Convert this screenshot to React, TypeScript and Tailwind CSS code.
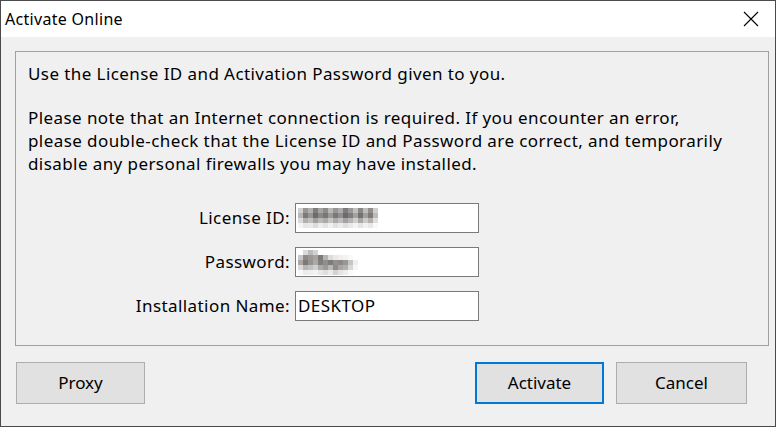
const licenseMosaic = [
  ["#cfcfcf", "#9a9693", "#b1b0b0", "#7f7c7a", "#a7a5a4", "#8d8a89", "#b9b7b7", "#97959a", "#adabab", "#7d7b7a", "#9a9898", "#c0c0c0", "#898786", "#bdbcbc", "#918f8e", "#cfcfcf"],
  ["#b9b7b5", "#7d7975", "#999796", "#6e6b6a", "#8a888c", "#7a7772", "#9b999a", "#7b7877", "#939090", "#6d6a69", "#807d80", "#a4a2a2", "#74716e", "#a2a09f", "#7e7a78", "#bdbbba"],
  ["#dadada", "#b3b1b0", "#c2c0bf", "#a3a19f", "#b9b7b7", "#acaaa8", "#c6c5c4", "#adaba9", "#bfbebd", "#a5a3a1", "#b6b4b4", "#d0cfcf", "#aaa7a6", "#cccbcb", "#b3b1b0", "#dedede"],
  ["#f4f4f4", "#e6e6e6", "#eaeaea", "#dcdcdc", "#ededed", "#e3e3e3", "#f0f0f0", "#e1e1e1", "#ebebeb", "#dfdfdf", "#e9e9e9", "#f3f3f3", "#e4e4e4", "#f1f1f1", "#e8e8e8", "#f8f8f8"],
];

const passwordMosaic = [
  ["#ffffff", "#dadada", "#bcbcbc", "#d2d2d2", "#ffffff", "#ffffff", "#ffffff", "#ffffff", "#ffffff", "#ffffff", "#ffffff", "#ffffff"],
  ["#c9c7c6", "#8e8a88", "#9a9795", "#a6a4a2", "#7d7a79", "#b5b3b2", "#dcdcdc", "#e9e9e9", "#efefef", "#f3f3f3", "#f9f9f9", "#ffffff"],
  ["#aaa7a5", "#7c7875", "#959392", "#acaaa8", "#817e7c", "#908d8c", "#7e7a78", "#928f8e", "#8c8988", "#999695", "#c6c6c6", "#efefef"],
  ["#dadada", "#b8b6b5", "#c3c1c0", "#d0d0d0", "#acaaa9", "#9c9998", "#bab8b7", "#8e8b89", "#a8a5a4", "#b2b0af", "#d8d8d8", "#f6f6f6"],
  ["#f8f8f8", "#ebebeb", "#efefef", "#f3f3f3", "#e8e8e8", "#dfdfdf", "#ebebeb", "#d3d3d3", "#e4e4e4", "#eeeeee", "#fafafa", "#ffffff"],
];

function Mosaic({ rows }: { rows: string[][] }) {
  return (
    <div className="flex flex-col">
      {rows.map((row, i) => (
        <div key={i} className="flex">
          {row.map((c, j) => (
            <div key={j} className="w-[5px] h-[5px]" style={{ backgroundColor: c }} />
          ))}
        </div>
      ))}
    </div>
  );
}

function Field({ label, children }: { label: string; children: React.ReactNode }) {
  return (
    <div className="flex items-center">
      <div className="w-[279px] pr-[5px] text-right">{label}</div>
      <div className="w-[184px] h-[30px] bg-white border border-[#7a7a7a] flex items-center pl-[2px]">
        {children}
      </div>
    </div>
  );
}

function Button({ label, primary, wide }: { label: string; primary?: boolean; wide?: boolean }) {
  return (
    <button
      className={
        "h-[42px] bg-[#e1e1e1] text-[17px] text-black tracking-normal " +
        (wide ? "w-[131px] " : "w-[129px] ") +
        (primary ? "border-2 border-[#0078d7]" : "border border-[#adadad]")
      }
    >
      {label}
    </button>
  );
}

export default function App() {
  return (
    <div
      className="w-[776px] h-[427px] border border-[#4a4a4a] flex flex-col bg-[#f0f0f0] text-black text-[17px] tracking-[0.42px]"
      style={{ fontFamily: '"Noto Sans", "Open Sans", sans-serif' }}
    >
      {/* Title bar */}
      <div className="h-[36px] bg-white flex items-center justify-between pl-[4px] pr-[16px]">
        <span className="text-[16px] tracking-[0.3px]">Activate Online</span>
        <svg width="16" height="16" viewBox="0 0 16 16">
          <path d="M1 1 L15 15 M15 1 L1 15" stroke="#000" strokeWidth="1.1" />
        </svg>
      </div>

      <div className="flex-1 flex flex-col pl-[14px] pr-[6px]">
        {/* Group box */}
        <div className="mt-[14px] h-[295px] border border-[#a0a0a0] pl-[12px] pt-[10px]">
          <p className="leading-[23px]">Use the License ID and Activation Password given to you.</p>
          <p className="leading-[23px] mt-[21px]">
            Please note that an Internet connection is required. If you encounter an error,
            <br />
            please double-check that the License ID and Password are correct, and temporarily
            <br />
            disable any personal firewalls you may have installed.
          </p>

          <div className="-ml-[12px] mt-[28px] flex flex-col gap-[14px]">
            <Field label="License ID:">
              <Mosaic rows={licenseMosaic} />
            </Field>
            <Field label="Password:">
              <Mosaic rows={passwordMosaic} />
            </Field>
            <Field label="Installation Name:">
              <span>DESKTOP</span>
            </Field>
          </div>
        </div>

        {/* Buttons */}
        <div className="mt-[16px] flex items-center pl-[1px]">
          <Button label="Proxy" />
          <div className="flex-1" />
          <div className="flex gap-[12px] mr-[22px]">
            <Button label="Activate" primary />
            <Button label="Cancel" wide />
          </div>
        </div>
      </div>
    </div>
  );
}
